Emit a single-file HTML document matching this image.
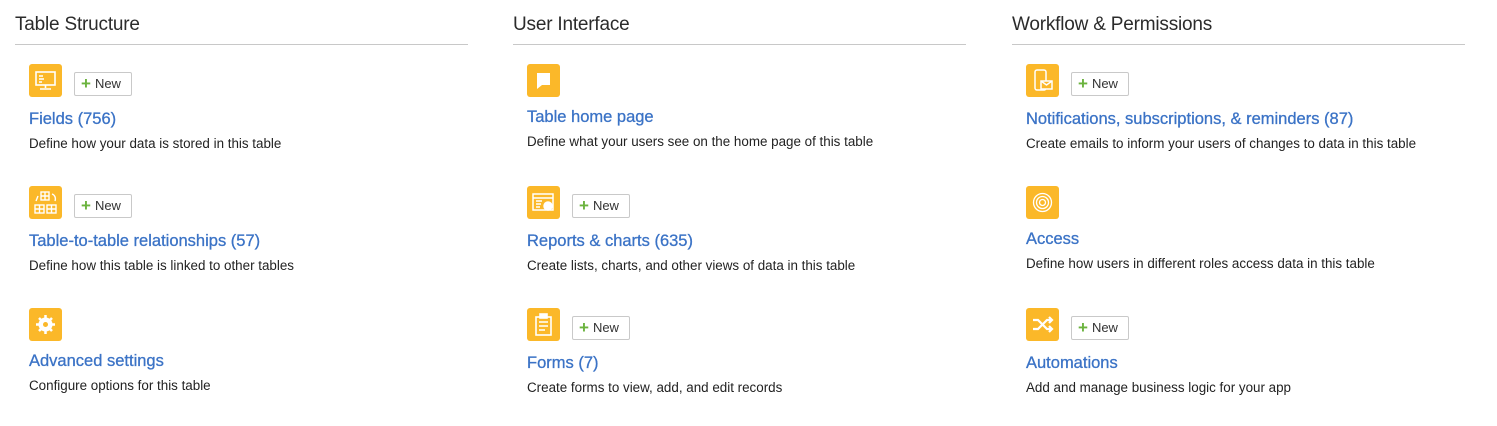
<!DOCTYPE html>
<html><head><style>
*{margin:0;padding:0;box-sizing:border-box}
body{width:1497px;height:426px;background:#fff;font-family:"Liberation Sans",sans-serif;position:relative;overflow:hidden}
.col{position:absolute;top:0;width:453px}
h2{position:absolute;top:14px;left:0;font-size:19px;font-weight:normal;color:#2b2b2b;white-space:nowrap;letter-spacing:-0.2px}
.rule{position:absolute;top:44px;left:0;width:453px;height:1px;background:#c8c8c8}
.ic{position:absolute;left:14px;width:33px;height:33px;background:#fbb829;border-radius:3px}
.ic svg{width:33px;height:33px}
.nb{position:absolute;left:59px;width:58px;height:24px;border:1px solid #c9c9c9;border-radius:2px;font-size:13px;color:#333;line-height:22px;padding-left:6px}
.nb b{color:#6bb33e;font-size:17px;font-weight:bold;vertical-align:-1px;margin-right:4px}
.t{position:absolute;left:14px;font-size:16.5px;color:#3b73c6;white-space:nowrap;-webkit-text-stroke:0.3px #3b73c6}
.d{position:absolute;left:14px;font-size:13.4px;color:#222;white-space:nowrap}
</style></head><body>
<div class="col" style="left:15px">
<h2>Table Structure</h2><div class="rule"></div>
<div class="ic" style="top:64px"><svg viewBox="0 0 33 33" fill="none" stroke="#fff" stroke-width="1.6"><rect x="7" y="8" width="19" height="13"/><path d="M16.5 21v3M11 25h11M10 12h4M10 15h5M10 18h3"/></svg></div>
<div class="nb" style="top:72px"><b>+</b>New</div>
<div class="t" style="top:110px">Fields (756)</div>
<div class="d" style="top:136px">Define how your data is stored in this table</div>
<div class="ic" style="top:186px"><svg viewBox="0 0 33 33" fill="none" stroke="#fff" stroke-width="1.4"><rect x="12" y="6" width="8" height="8"/><path d="M16 6v8M12 10h8"/><rect x="6" y="19" width="9" height="8"/><path d="M10.5 19v8M6 23h9"/><rect x="18" y="19" width="9" height="8"/><path d="M22.5 19v8M18 23h9M9 10l-2 5M23 8c3 1 4 4 3 7"/></svg></div>
<div class="nb" style="top:194px"><b>+</b>New</div>
<div class="t" style="top:232px">Table-to-table relationships (57)</div>
<div class="d" style="top:258px">Define how this table is linked to other tables</div>
<div class="ic" style="top:308px"><svg viewBox="0 0 33 33"><circle cx="16.5" cy="16.5" r="7" fill="#fff"/><circle cx="16.5" cy="16.5" r="2.5" fill="#fbb829"/><path d="M16.5 7v4M16.5 22v4M7 16.5h4M22 16.5h4M10 10l3 3M20 20l3 3M10 23l3-3M20 13l3-3" stroke="#fff" stroke-width="2.5"/></svg></div>
<div class="t" style="top:352px">Advanced settings</div>
<div class="d" style="top:378px">Configure options for this table</div>
</div>
<div class="col" style="left:513px">
<h2>User Interface</h2><div class="rule"></div>
<div class="ic" style="top:64px"><svg viewBox="0 0 33 33"><path d="M10 9h13v12h-8l-5 4z" fill="#fff"/></svg></div>
<div class="t" style="top:108px">Table home page</div>
<div class="d" style="top:134px">Define what your users see on the home page of this table</div>
<div class="ic" style="top:186px"><svg viewBox="0 0 33 33" fill="none" stroke="#fff" stroke-width="1.5"><rect x="6" y="8" width="20" height="16"/><path d="M6 12h20M9 15h6M9 18h5M9 21h4"/><circle cx="21" cy="20" r="4" fill="#fff"/></svg></div>
<div class="nb" style="top:194px"><b>+</b>New</div>
<div class="t" style="top:232px">Reports &amp; charts (635)</div>
<div class="d" style="top:258px">Create lists, charts, and other views of data in this table</div>
<div class="ic" style="top:308px"><svg viewBox="0 0 33 33" fill="none" stroke="#fff" stroke-width="1.6"><rect x="9" y="9" width="15" height="18"/><rect x="13" y="6" width="7" height="4" fill="#fff"/><path d="M12 14h9M12 18h9M12 22h6"/></svg></div>
<div class="nb" style="top:316px"><b>+</b>New</div>
<div class="t" style="top:354px">Forms (7)</div>
<div class="d" style="top:380px">Create forms to view, add, and edit records</div>
</div>
<div class="col" style="left:1012px">
<h2>Workflow &amp; Permissions</h2><div class="rule"></div>
<div class="ic" style="top:64px"><svg viewBox="0 0 33 33" fill="none" stroke="#fff" stroke-width="1.5"><rect x="9" y="6" width="11" height="20" rx="2"/><rect x="15" y="17" width="11" height="8" fill="#fbb829"/><path d="M15 17l5.5 4 5.5-4"/></svg></div>
<div class="nb" style="top:72px"><b>+</b>New</div>
<div class="t" style="top:110px">Notifications, subscriptions, &amp; reminders (87)</div>
<div class="d" style="top:136px">Create emails to inform your users of changes to data in this table</div>
<div class="ic" style="top:186px"><svg viewBox="0 0 33 33" fill="none" stroke="#fff" stroke-width="1.3"><circle cx="16.5" cy="16.5" r="9"/><circle cx="16.5" cy="16.5" r="6"/><circle cx="16.5" cy="16.5" r="3"/></svg></div>
<div class="t" style="top:230px">Access</div>
<div class="d" style="top:256px">Define how users in different roles access data in this table</div>
<div class="ic" style="top:308px"><svg viewBox="0 0 33 33" fill="none" stroke="#fff" stroke-width="2.2"><path d="M7 12h5l9 9h5M7 21h5l9-9h5M23 9l3 3-3 3M23 18l3 3-3 3"/></svg></div>
<div class="nb" style="top:316px"><b>+</b>New</div>
<div class="t" style="top:354px">Automations</div>
<div class="d" style="top:380px">Add and manage business logic for your app</div>
</div>
</body></html>
